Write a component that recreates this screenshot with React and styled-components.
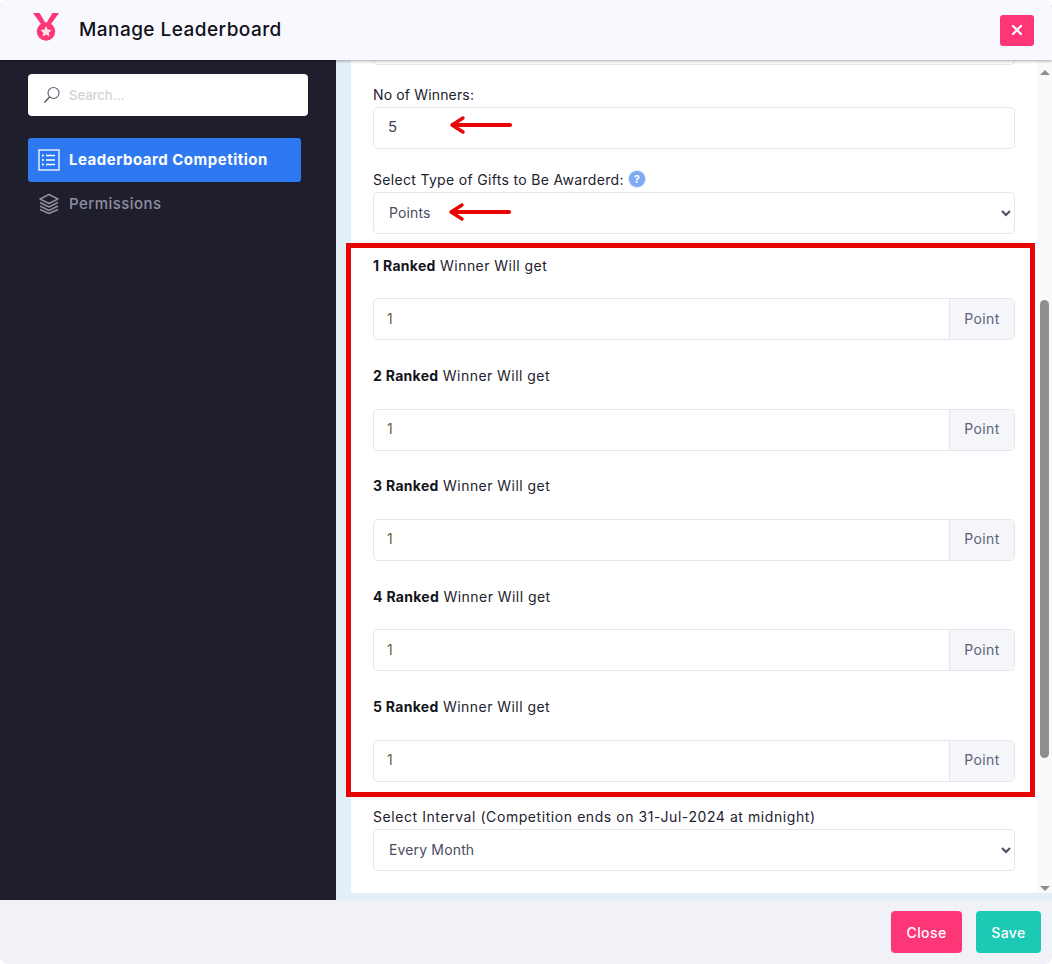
import React from "react";
import styled, { createGlobalStyle } from "styled-components";

const Global = createGlobalStyle`
  html, body { margin: 0; padding: 0; background: #fff; }
  body { font-family: Inter, "Liberation Sans", sans-serif; }
  * { box-sizing: border-box; }
`;

const Modal = styled.div`
  position: relative;
  width: 1052px;
  height: 964px;
  display: flex;
  flex-direction: column;
  overflow: hidden;
  border-radius: 8px;
  background: #f0f2f7;
`;
const Header = styled.header`
  height: 60px;
  flex: none;
  display: flex;
  align-items: center;
  padding: 0 18px 0 31px;
  background: #f8f9fe;
  box-shadow: 0 1px 3px rgba(0, 0, 0, 0.35);
  position: relative;
  z-index: 2;
`;
const Title = styled.h1`
  margin: 0 0 2px 18px;
  font-size: 19px;
  font-weight: 500;
  color: #10101a;
  letter-spacing: 0.45px;
  flex: 1;
`;
const CloseX = styled.button`
  width: 34px;
  height: 31px;
  padding: 0;
  border: none;
  border-radius: 3px;
  background: #fd3777;
  display: flex;
  align-items: center;
  justify-content: center;
`;
const Body = styled.div`
  flex: none;
  height: 840px;
  display: flex;
`;
const Sidebar = styled.aside`
  width: 336px;
  flex: none;
  background: #1e1e2d;
  padding: 14px 28px 0;
`;
const SearchBox = styled.div`
  width: 280px;
  height: 42px;
  display: flex;
  align-items: center;
  gap: 8px;
  padding-left: 15px;
  background: #fff;
  border-radius: 4px;
  margin-bottom: 22px;
`;
const SearchText = styled.span`
  font-size: 13px;
  font-weight: 500;
  color: #d2d2d6;
`;
const NavItem = styled.div`
  width: 273px;
  height: 44px;
  display: flex;
  align-items: center;
  gap: 9px;
  padding: 0 0 2px 10px;
  border-radius: 3px;
  background: ${(p) => (p.$active ? "#2e78f2" : "transparent")};
  color: ${(p) => (p.$active ? "#fff" : "#8f8f9f")};
  font-size: 15px;
  font-weight: ${(p) => (p.$active ? 700 : 500)};
  letter-spacing: ${(p) => (p.$active ? "0.5px" : "0.45px")};
  svg { margin-top: 2px; }
`;
const Main = styled.main`
  flex: 1;
  display: flex;
  background: #e4f0f7;
  padding-left: 15px;
`;
const Card = styled.div`
  flex: 1;
  height: 833px;
  background: #fff;
  padding: 0 22px;
  display: flex;
  flex-direction: column;
`;
const ClippedInput = styled.div`
  height: 5px;
  border: 1px solid #e4e6ef;
  border-top: none;
  border-radius: 0 0 5px 5px;
  margin-bottom: 19px;
`;
const FieldLabel = styled.label`
  display: flex;
  align-items: center;
  gap: 5px;
  height: 21px;
  padding-top: ${(p) => p.$nudge ?? 0}px;
  font-size: 14px;
  color: #22222e;
  letter-spacing: ${(p) => p.$ls ?? 0.57}px;
  margin-bottom: ${(p) => p.$gap ?? 2}px;
  b { font-weight: 700; color: #14141c; letter-spacing: 0.3px; }
`;
const TextInput = styled.div`
  height: 42px;
  display: flex;
  align-items: center;
  padding: 0 0 3px 14px;
  border: 1px solid #e4e6ef;
  border-radius: 5px;
  font-size: 15px;
  color: #3f4254;
  margin-bottom: 20px;
`;
const SelectBox = styled.select`
  display: block;
  width: 100%;
  height: 42px;
  padding: 0 12px 1px 11px;
  border: 1px solid #e4e6ef;
  border-radius: 5px;
  background-color: #fff;
  font-family: inherit;
  font-size: 14px;
  color: #4a4d5e;
  letter-spacing: 0.15px;
  margin-bottom: ${(p) => p.$mb ?? 20}px;
`;
const HelpDot = styled.span`
  width: 16px;
  height: 16px;
  border-radius: 50%;
  background: #7fa9f5;
  box-shadow: 0 0 0 1px #d5e2fb;
  color: #fff;
  font-size: 11px;
  font-weight: 700;
  letter-spacing: 0;
  display: inline-flex;
  align-items: center;
  justify-content: center;
  margin-top: -2px;
`;
const RankGroup = styled.div`
  height: 106px;
  margin-bottom: 4.3px;
`;
const InputGroup = styled.div`
  display: flex;
  height: 42px;
  border: 1px solid #e4e6ef;
  border-radius: 5px;
  overflow: hidden;
`;
const GroupValue = styled.div`
  flex: 1;
  display: flex;
  align-items: center;
  padding: 0 0 2px 13px;
  font-size: 14px;
  color: #6f5a3a;
`;
const Addon = styled.div`
  width: 65px;
  display: flex;
  align-items: center;
  justify-content: center;
  padding-bottom: 2px;
  background: #f5f6fa;
  border-left: 1px solid #e4e6ef;
  font-size: 14px;
  letter-spacing: 0.4px;
  color: #5e6278;
`;
const Scrollbar = styled.div`
  width: 15px;
  flex: none;
  height: 833px;
  background: #fafafa;
  display: flex;
  flex-direction: column;
  align-items: center;
  padding-top: 10px;
`;
const ArrowUp = styled.div`
  width: 0;
  height: 0;
  border-left: 5px solid transparent;
  border-right: 5px solid transparent;
  border-bottom: 5px solid #8f8f8f;
`;
const ArrowDown = styled(ArrowUp)`
  border-bottom: none;
  border-top: 5px solid #8f8f8f;
  margin-top: auto;
  margin-bottom: 2px;
`;
const Thumb = styled.div`
  width: 9px;
  height: 458px;
  margin-top: 225px;
  background: #8f8f8f;
  border-radius: 5px;
`;
const Footer = styled.footer`
  flex: 1;
  display: flex;
  justify-content: flex-end;
  align-items: flex-start;
  gap: 14px;
  padding: 11px 11px 0 0;
  background: #f0f2f7;
`;
const FooterButton = styled.button`
  width: ${(p) => p.$w}px;
  height: 42px;
  border: none;
  border-radius: 4px;
  background: ${(p) => p.$bg};
  color: #fff;
  font-family: inherit;
  font-size: 14px;
  font-weight: 500;
  letter-spacing: 0.4px;
`;
const Annotation = styled.div`
  position: absolute;
  left: 346px;
  top: 243px;
  width: 689px;
  height: 554px;
  border: 5px solid #e80505;
  pointer-events: none;
`;
const ArrowMark = styled.svg`
  position: absolute;
  left: ${(p) => p.$x}px;
  top: ${(p) => p.$y}px;
`;

const Medal = () => (
  <svg width="30" height="34" viewBox="0 0 30 34">
    <path d="M2 0h6.500l5.800 9.500-4 2z" fill="#fd3777" />
    <path d="M28 0h-6.500l-5.800 9.500 4 2z" fill="#fd3777" />
    <circle cx="15" cy="18.500" r="9.200" fill="#fd3777" />
    <path d="M15 13l1.700 3.500 3.900.5-2.900 2.700.8 3.900-3.500-2-3.500 2 .8-3.900-2.900-2.700 3.900-.5z" fill="#fde4ec" />
  </svg>
);

const ListIcon = () => (
  <svg width="22" height="22" viewBox="0 0 22 22" fill="none" stroke="#fff">
    <rect x="1" y="1" width="20" height="20" strokeWidth="1.300" />
    <path d="M8 6.500h9M8 11h9M8 15.500h9" strokeWidth="1.400" />
    <path d="M4 6.500h1.600M4 11h1.600M4 15.500h1.600" strokeWidth="1.800" />
  </svg>
);

const LayersIcon = () => (
  <svg width="22" height="22" viewBox="0 0 22 22" fill="none" stroke="#8f8f9f" strokeWidth="1.400" strokeLinejoin="round">
    <path d="M11 1.500l9 4.500-9 4.500-9-4.500z" />
    <path d="M2 9.500l9 4.500 9-4.500" />
    <path d="M2 13l9 4.500L20 13" />
    <path d="M2 16.500l9 4 9-4" />
  </svg>
);

const SearchIcon = () => (
  <svg width="18" height="18" viewBox="0 0 18 18" fill="none">
    <circle cx="10.500" cy="7" r="5.500" stroke="#5f6472" strokeWidth="1.200" />
    <path d="M6.500 11L1.500 16.500" stroke="#4c5060" strokeWidth="1.300" />
  </svg>
);

const XIcon = () => (
  <svg width="12" height="12" viewBox="0 0 12 12">
    <path d="M2 2l8 8M10 2l-8 8" stroke="#fff" strokeWidth="2.200" strokeLinecap="round" />
  </svg>
);

const RedArrow = ({ x, y }) => (
  <ArrowMark $x={x} $y={y} width="64" height="20" viewBox="0 0 64 20">
    <path d="M4 10h57" stroke="#e80505" strokeWidth="4.200" strokeLinecap="round" />
    <path d="M14 3L3 10l11 7" fill="none" stroke="#e80505" strokeWidth="3.400" strokeLinecap="round" strokeLinejoin="round" />
  </ArrowMark>
);

const ranks = [1, 2, 3, 4, 5];

export default function App() {
  return (
    <Modal>
      <Global />
      <Header>
        <Medal />
        <Title>Manage Leaderboard</Title>
        <CloseX aria-label="Close"><XIcon /></CloseX>
      </Header>
      <Body>
        <Sidebar>
          <SearchBox>
            <SearchIcon />
            <SearchText>Search...</SearchText>
          </SearchBox>
          <NavItem $active><ListIcon />Leaderboard Competition</NavItem>
          <NavItem><LayersIcon />Permissions</NavItem>
        </Sidebar>
        <Main>
          <Card>
            <ClippedInput />
            <FieldLabel $ls={0.15}>No of Winners:</FieldLabel>
            <TextInput>5</TextInput>
            <FieldLabel $ls={0.32}>Select Type of Gifts to Be Awarderd: <HelpDot>?</HelpDot></FieldLabel>
            <SelectBox $mb={20.4} defaultValue="Points"><option>Points</option></SelectBox>
            {ranks.map((n) => (
              <RankGroup key={n}>
                <FieldLabel $gap={23} $nudge={1} $ls={0.45}><span><b>{n} Ranked</b> Winner Will get</span></FieldLabel>
                <InputGroup>
                  <GroupValue>1</GroupValue>
                  <Addon>Point</Addon>
                </InputGroup>
              </RankGroup>
            ))}
            <FieldLabel>Select Interval (Competition ends on 31-Jul-2024 at midnight)</FieldLabel>
            <SelectBox defaultValue="Every Month"><option>Every Month</option></SelectBox>
          </Card>
          <Scrollbar>
            <ArrowUp />
            <Thumb />
            <ArrowDown />
          </Scrollbar>
        </Main>
      </Body>
      <Footer>
        <FooterButton $w={71} $bg="#fd3777">Close</FooterButton>
        <FooterButton $w={65} $bg="#1bc9b5">Save</FooterButton>
      </Footer>
      <Annotation />
      <RedArrow x={449} y={115} />
      <RedArrow x={448} y={202} />
    </Modal>
  );
}
